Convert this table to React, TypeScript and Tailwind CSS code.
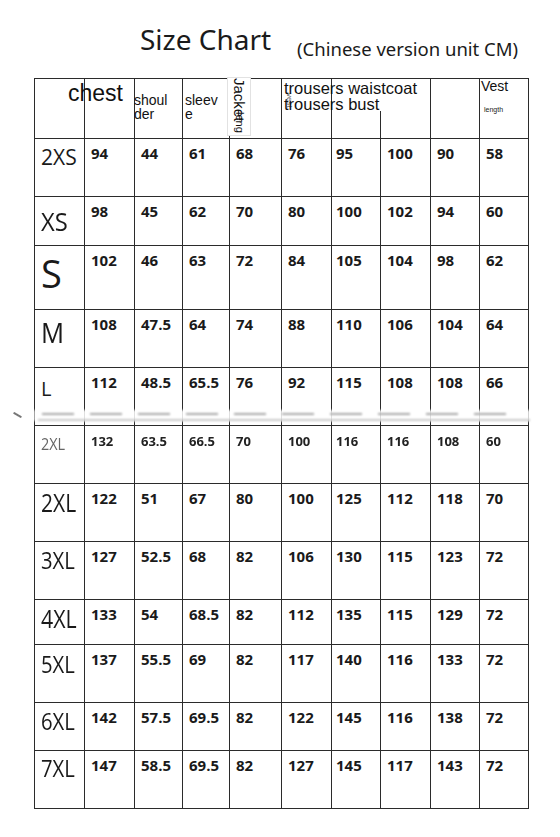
import React from 'react';

const COLS = 'grid grid-cols-[50px_50px_48px_47px_52px_50px_49px_50px_49px_49px]';
const CELL = 'border-r border-b border-[#2b2b2b]';

interface SizeRow {
  size: string;
  values: string[];
  h: string;
  label: string;
  blurred?: boolean;
}

const rows: SizeRow[] = [
  { size: '2XS', values: ['94', '44', '61', '68', '76', '95', '100', '90', '58'], h: 'h-[58px]', label: 'text-[21px] pt-[8px]' },
  { size: 'XS', values: ['98', '45', '62', '70', '80', '100', '102', '94', '60'], h: 'h-[49px]', label: 'text-[25px] pt-[12px] scale-x-[0.95]' },
  { size: 'S', values: ['102', '46', '63', '72', '84', '105', '104', '98', '62'], h: 'h-[64px]', label: 'text-[38px] pt-[8px]' },
  { size: 'M', values: ['108', '47.5', '64', '74', '88', '110', '106', '104', '64'], h: 'h-[58px]', label: 'text-[27px] pt-[9px] scale-x-[0.95]' },
  { size: 'L', values: ['112', '48.5', '65.5', '76', '92', '115', '108', '108', '66'], h: 'h-[58px]', label: 'text-[20px] pt-[11px]' },
  { size: '2XL', values: ['132', '63.5', '66.5', '70', '100', '116', '116', '108', '60'], h: 'h-[58px]', label: 'text-[16px] pt-[10px] scale-x-[0.9]', blurred: true },
  { size: '2XL', values: ['122', '51', '67', '80', '100', '125', '112', '118', '70'], h: 'h-[58px]', label: 'text-[25px] pt-[6px] scale-x-[0.84]' },
  { size: '3XL', values: ['127', '52.5', '68', '82', '106', '130', '115', '123', '72'], h: 'h-[58px]', label: 'text-[23px] pt-[7px] scale-x-[0.88]' },
  { size: '4XL', values: ['133', '54', '68.5', '82', '112', '135', '115', '129', '72'], h: 'h-[45px]', label: 'text-[26px] pt-[5px] scale-x-[0.82]' },
  { size: '5XL', values: ['137', '55.5', '69', '82', '117', '140', '116', '133', '72'], h: 'h-[58px]', label: 'text-[23px] pt-[8px] scale-x-[0.88]' },
  { size: '6XL', values: ['142', '57.5', '69.5', '82', '122', '145', '116', '138', '72'], h: 'h-[48px]', label: 'text-[23px] pt-[7px] scale-x-[0.88]' },
  { size: '7XL', values: ['147', '58.5', '69.5', '82', '127', '145', '117', '143', '72'], h: 'h-[58px]', label: 'text-[23px] pt-[6px] scale-x-[0.88]' },
];

function HeaderRow() {
  return (
    <div className={`${COLS} h-[60px] font-['Liberation_Sans',Arial,sans-serif] text-[#111]`}>
      <div className={CELL} />
      <div className={`${CELL} pt-[3px]`}>
        <span className="relative z-10 block -ml-[17px] whitespace-nowrap text-[23px] leading-none">chest</span>
      </div>
      <div className={`${CELL} pt-[14px] -ml-[1px] text-[14px] leading-[14px]`}>
        <span className="block">shoul</span>
        <span className="block">der</span>
      </div>
      <div className={`${CELL} pl-[2px] pt-[14px] text-[14px] leading-[14px]`}>
        <span className="block">sleev</span>
        <span className="block">e</span>
      </div>
      <div className={CELL}>
        {/* pasted label, rotated */}
        <div className="-ml-[3px] -mt-[2px] flex h-[59px] w-[24px] flex-col items-center border border-[#e2e2e2] bg-white">
          <span className="[writing-mode:vertical-rl] text-[15px] leading-none">Jacket</span>
          <span className="-mt-[9px] [writing-mode:vertical-rl] text-[11px] leading-none">leng</span>
        </div>
      </div>
      <div className={`${CELL} relative`}>
        <span className="absolute left-[3px] top-[14px] [writing-mode:vertical-rl] text-[8px] leading-none text-[#666]">vest</span>
        <div className="relative z-10 whitespace-nowrap pl-[2px] pt-[1px] text-[16.5px] leading-[16px]">
          <span className="block">trousers waistcoat</span>
          <span className="block">trousers bust</span>
        </div>
      </div>
      <div className={CELL} />
      <div className={CELL}>
        <div className="-ml-[2px] h-[32px] bg-white" />
      </div>
      <div className={CELL} />
      <div className={`${CELL} pl-[1px]`}>
        <span className="block text-[14px] leading-none">Vest</span>
        <span className="mt-[13px] ml-[3px] block text-[7px] leading-none text-[#222]">length</span>
      </div>
    </div>
  );
}

function DataRow({ row }: { row: SizeRow }) {
  return (
    <div className={`${COLS} ${row.h} font-['Open_Sans',sans-serif] text-[#1a1a1a]`}>
      <div className={`${CELL} pl-[6px] leading-none`}>
        <span className={`inline-block origin-left ${row.label} ${row.blurred ? 'text-[#666] blur-[0.5px]' : ''}`}>
          {row.size}
        </span>
      </div>
      {row.values.map((v, i) => (
        <div
          key={i}
          className={`${CELL} ${i === 5 ? 'pl-[4px]' : 'pl-[6px]'} leading-none font-bold ${
            row.blurred ? 'pt-[9px] text-[13px] text-[#222] blur-[0.6px]' : 'pt-[7px] text-[15px]'
          }`}
        >
          {v}
        </div>
      ))}
    </div>
  );
}

export default function App() {
  return (
    <div className="relative min-h-[837px] w-[560px] bg-white">
      <div className="flex h-[78px] font-['Noto_Sans',sans-serif] text-[#1a1a1a]">
        <div className="w-[297px] pl-[140px] pt-[25px] text-[28px] leading-none">Size Chart</div>
        <div className="pt-[40px] text-[18.5px] leading-none">(Chinese version unit CM)</div>
      </div>

      <div className="ml-[34px] w-[495px] border-l border-t border-[#2b2b2b]">
        <HeaderRow />
        {rows.map((r, i) => (
          <DataRow key={i} row={r} />
        ))}
      </div>

      {/* scan crease across the table */}
      <div className="pointer-events-none absolute left-[10px] top-[410px] w-[522px]">
        <div className="ml-[24px] h-[11px] w-[496px] bg-white/85 blur-[1px]" />
        <div className="absolute left-[32px] top-[3px] flex gap-[16px] blur-[0.8px]">
          {Array.from({ length: 10 }).map((_, i) => (
            <div key={i} className="h-[2px] w-[32px] bg-[#a8a8a8]" />
          ))}
        </div>
        <div className="absolute left-[28px] top-[9px] h-[2px] w-[492px] bg-[#c8c8c8] blur-[0.8px]" />
        <div className="absolute left-[3px] top-[4px] h-[2px] w-[9px] rotate-[30deg] bg-[#777] blur-[0.4px]" />
      </div>
    </div>
  );
}
